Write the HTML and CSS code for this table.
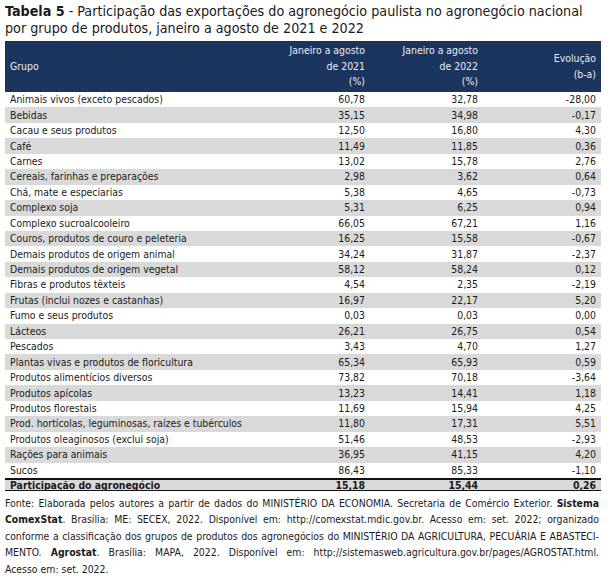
FILE: index.html
```html
<!DOCTYPE html>
<html lang="pt-BR">
<head>
<meta charset="utf-8">
<title>Tabela 5</title>
<link rel="stylesheet" href="styles.css">
</head>
<body>
<div class="page">
  <h1 class="title"><span class="tline"><b>Tabela 5</b> - Participação das exportações do agronegócio paulista no agronegócio nacional</span><span class="tline">por grupo de produtos, janeiro a agosto de 2021 e 2022</span></h1>
  <table class="tbl">
    <colgroup>
      <col class="c0"><col class="c1"><col class="c2"><col class="c3">
    </colgroup>
    <thead>
      <tr>
        <th class="grp">Grupo</th>
        <th>Janeiro a agosto<br>de 2021<br>(%)</th>
        <th>Janeiro a agosto<br>de 2022<br>(%)</th>
        <th>Evolução<br>(b-a)</th>
      </tr>
    </thead>
    <tbody>
      <tr><td>Animais vivos (exceto pescados)</td><td>60,78</td><td>32,78</td><td>-28,00</td></tr>
      <tr><td>Bebidas</td><td>35,15</td><td>34,98</td><td>-0,17</td></tr>
      <tr><td>Cacau e seus produtos</td><td>12,50</td><td>16,80</td><td>4,30</td></tr>
      <tr><td>Café</td><td>11,49</td><td>11,85</td><td>0,36</td></tr>
      <tr><td>Carnes</td><td>13,02</td><td>15,78</td><td>2,76</td></tr>
      <tr><td>Cereais, farinhas e preparações</td><td>2,98</td><td>3,62</td><td>0,64</td></tr>
      <tr><td>Chá, mate e especiarias</td><td>5,38</td><td>4,65</td><td>-0,73</td></tr>
      <tr><td>Complexo soja</td><td>5,31</td><td>6,25</td><td>0,94</td></tr>
      <tr><td>Complexo sucroalcooleiro</td><td>66,05</td><td>67,21</td><td>1,16</td></tr>
      <tr><td>Couros, produtos de couro e peleteria</td><td>16,25</td><td>15,58</td><td>-0,67</td></tr>
      <tr><td>Demais produtos de origem animal</td><td>34,24</td><td>31,87</td><td>-2,37</td></tr>
      <tr><td>Demais produtos de origem vegetal</td><td>58,12</td><td>58,24</td><td>0,12</td></tr>
      <tr><td>Fibras e produtos têxteis</td><td>4,54</td><td>2,35</td><td>-2,19</td></tr>
      <tr><td>Frutas (inclui nozes e castanhas)</td><td>16,97</td><td>22,17</td><td>5,20</td></tr>
      <tr><td>Fumo e seus produtos</td><td>0,03</td><td>0,03</td><td>0,00</td></tr>
      <tr><td>Lácteos</td><td>26,21</td><td>26,75</td><td>0,54</td></tr>
      <tr><td>Pescados</td><td>3,43</td><td>4,70</td><td>1,27</td></tr>
      <tr><td>Plantas vivas e produtos de floricultura</td><td>65,34</td><td>65,93</td><td>0,59</td></tr>
      <tr><td>Produtos alimentícios diversos</td><td>73,82</td><td>70,18</td><td>-3,64</td></tr>
      <tr><td>Produtos apícolas</td><td>13,23</td><td>14,41</td><td>1,18</td></tr>
      <tr><td>Produtos florestais</td><td>11,69</td><td>15,94</td><td>4,25</td></tr>
      <tr><td>Prod. hortícolas, leguminosas, raízes e tubérculos</td><td>11,80</td><td>17,31</td><td>5,51</td></tr>
      <tr><td>Produtos oleaginosos (exclui soja)</td><td>51,46</td><td>48,53</td><td>-2,93</td></tr>
      <tr><td>Rações para animais</td><td>36,95</td><td>41,15</td><td>4,20</td></tr>
      <tr><td>Sucos</td><td>86,43</td><td>85,33</td><td>-1,10</td></tr>
    </tbody>
    <tfoot>
      <tr><td>Participação do agronegócio</td><td>15,18</td><td>15,44</td><td>0,26</td></tr>
    </tfoot>
  </table>
  <div class="source">
    <span class="line">Fonte: Elaborada pelos autores a partir de dados do MINISTÉRIO DA ECONOMIA. Secretaria de Comércio Exterior. <b>Sistema</b></span>
    <span class="line"><b>ComexStat</b>. Brasília: ME: SECEX, 2022. Disponível em: http://comexstat.mdic.gov.br. Acesso em: set. 2022; organizado</span>
    <span class="line">conforme a classificação dos grupos de produtos dos agronegócios do MINISTÉRIO DA AGRICULTURA, PECUÁRIA E ABASTECI-</span>
    <span class="line">MENTO. <b>Agrostat</b>. Brasília: MAPA, 2022. Disponível em: http://sistemasweb.agricultura.gov.br/pages/AGROSTAT.html.</span>
    <span class="line last">Acesso em: set. 2022.</span>
  </div>
</div>
</body>
</html>
```
FILE: styles.css
```css
html, body {
  margin: 0;
  padding: 0;
  background: #ffffff;
}
.page {
  padding: 3px 0 0 5px;
  font-family: "DejaVu Sans Condensed", "DejaVu Sans", sans-serif;
  font-stretch: condensed;
  color: #1a1a1a;
}
.title {
  margin: 0 0 4px 0;
  font-size: 14.2px;
  font-weight: normal;
  line-height: 17px;
  color: #1a1a1a;
}
.tline {
  display: block;
  white-space: nowrap;
}
.tbl {
  width: 596px;
  border-collapse: collapse;
  font-size: 10.4px;
  table-layout: fixed;
}
.c0 { width: 250px; }
.c1 { width: 115px; }
.c2 { width: 113px; }
.c3 { width: 118px; }
.tbl th {
  background: #1c355e;
  color: #e9ecf1;
  font-weight: normal;
  text-align: right;
  vertical-align: middle;
  padding: 0 5px;
  line-height: 15.5px;
  height: 51px;
}
.tbl th.grp { text-align: left; }
.tbl td {
  height: 15.45px;
  padding: 0 5px;
  line-height: 15px;
  text-align: right;
  white-space: nowrap;
}
.tbl td:first-child { text-align: left; }
.tbl tbody tr:nth-child(even) td { background: #d9d9d9; }
.tbl tfoot td {
  background: #d9d9d9;
  font-weight: bold;
  height: 10px;
  line-height: 10px;
  border-top: 2px solid #111;
  border-bottom: 1px solid #111;
}
.source {
  margin-top: 4px;
  font-size: 10.4px;
  line-height: 16.4px;
  width: 594px;
}
.line {
  display: block;
  text-align: justify;
  text-align-last: justify;
}
.line.last { text-align-last: left; }
```
